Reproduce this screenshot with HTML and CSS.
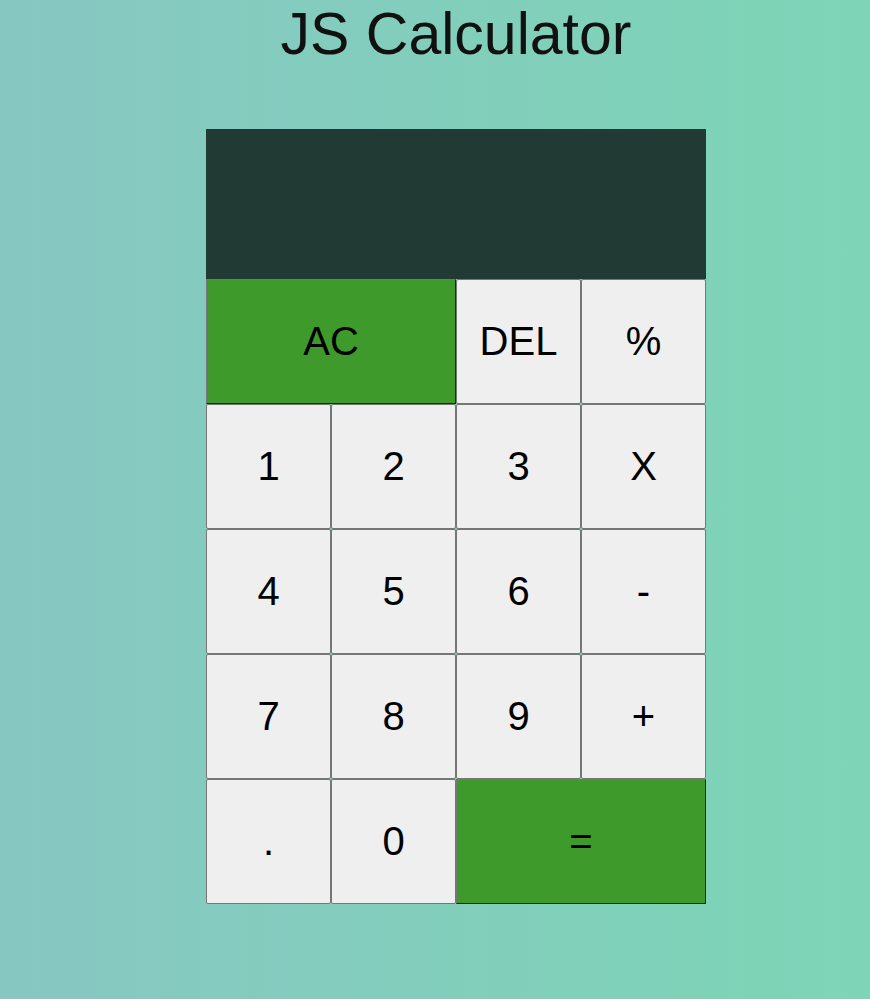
FILE: index.html
```html
<!DOCTYPE html>
<html lang="en">
<head>
<meta charset="utf-8">
<title>JS Calculator</title>
<link rel="stylesheet" href="styles.css">
</head>
<body>
<main class="page">
  <h1 class="title">JS Calculator</h1>
  <div class="calc">
    <div class="display"></div>
    <button class="key key-green key-wide">AC</button>
    <button class="key">DEL</button>
    <button class="key">%</button>
    <button class="key">1</button>
    <button class="key">2</button>
    <button class="key">3</button>
    <button class="key">X</button>
    <button class="key">4</button>
    <button class="key">5</button>
    <button class="key">6</button>
    <button class="key">-</button>
    <button class="key">7</button>
    <button class="key">8</button>
    <button class="key">9</button>
    <button class="key">+</button>
    <button class="key">.</button>
    <button class="key">0</button>
    <button class="key key-green key-wide">=</button>
  </div>
</main>
</body>
</html>
```
FILE: styles.css
```css
html, body {
  margin: 0;
  padding: 0;
  min-height: 100%;
}

body {
  min-height: 100vh;
  background: linear-gradient(to right, #87c7c2, #7dd5b6);
  font-family: "Liberation Sans", Arial, Helvetica, sans-serif;
  color: #000;
}

.page {
  padding-left: 42px;
  display: flex;
  flex-direction: column;
  align-items: center;
}

.title {
  margin: 0 0 65px;
  padding-top: 4px;
  font-size: 59px;
  line-height: 60px;
  font-weight: normal;
  text-align: center;
  color: #111;
}

.calc {
  display: grid;
  grid-template-columns: repeat(4, 125px);
  grid-template-rows: 150px repeat(5, 125px);
}

.display {
  grid-column: 1 / -1;
  background: #223a34;
}

.key {
  box-sizing: border-box;
  margin: 0;
  padding: 0;
  width: 125px;
  height: 125px;
  background: #efefef;
  border: 1px solid #767676;
  border-radius: 2px;
  font-family: "Liberation Sans", Arial, Helvetica, sans-serif;
  font-size: 40px;
  color: #000;
  cursor: pointer;
}

.key-wide {
  grid-column: span 2;
  width: 250px;
}

.key-green {
  background: #3e9a2a;
  border-radius: 0;
  border-color: #767676 #222 #222 #767676;
}
```
